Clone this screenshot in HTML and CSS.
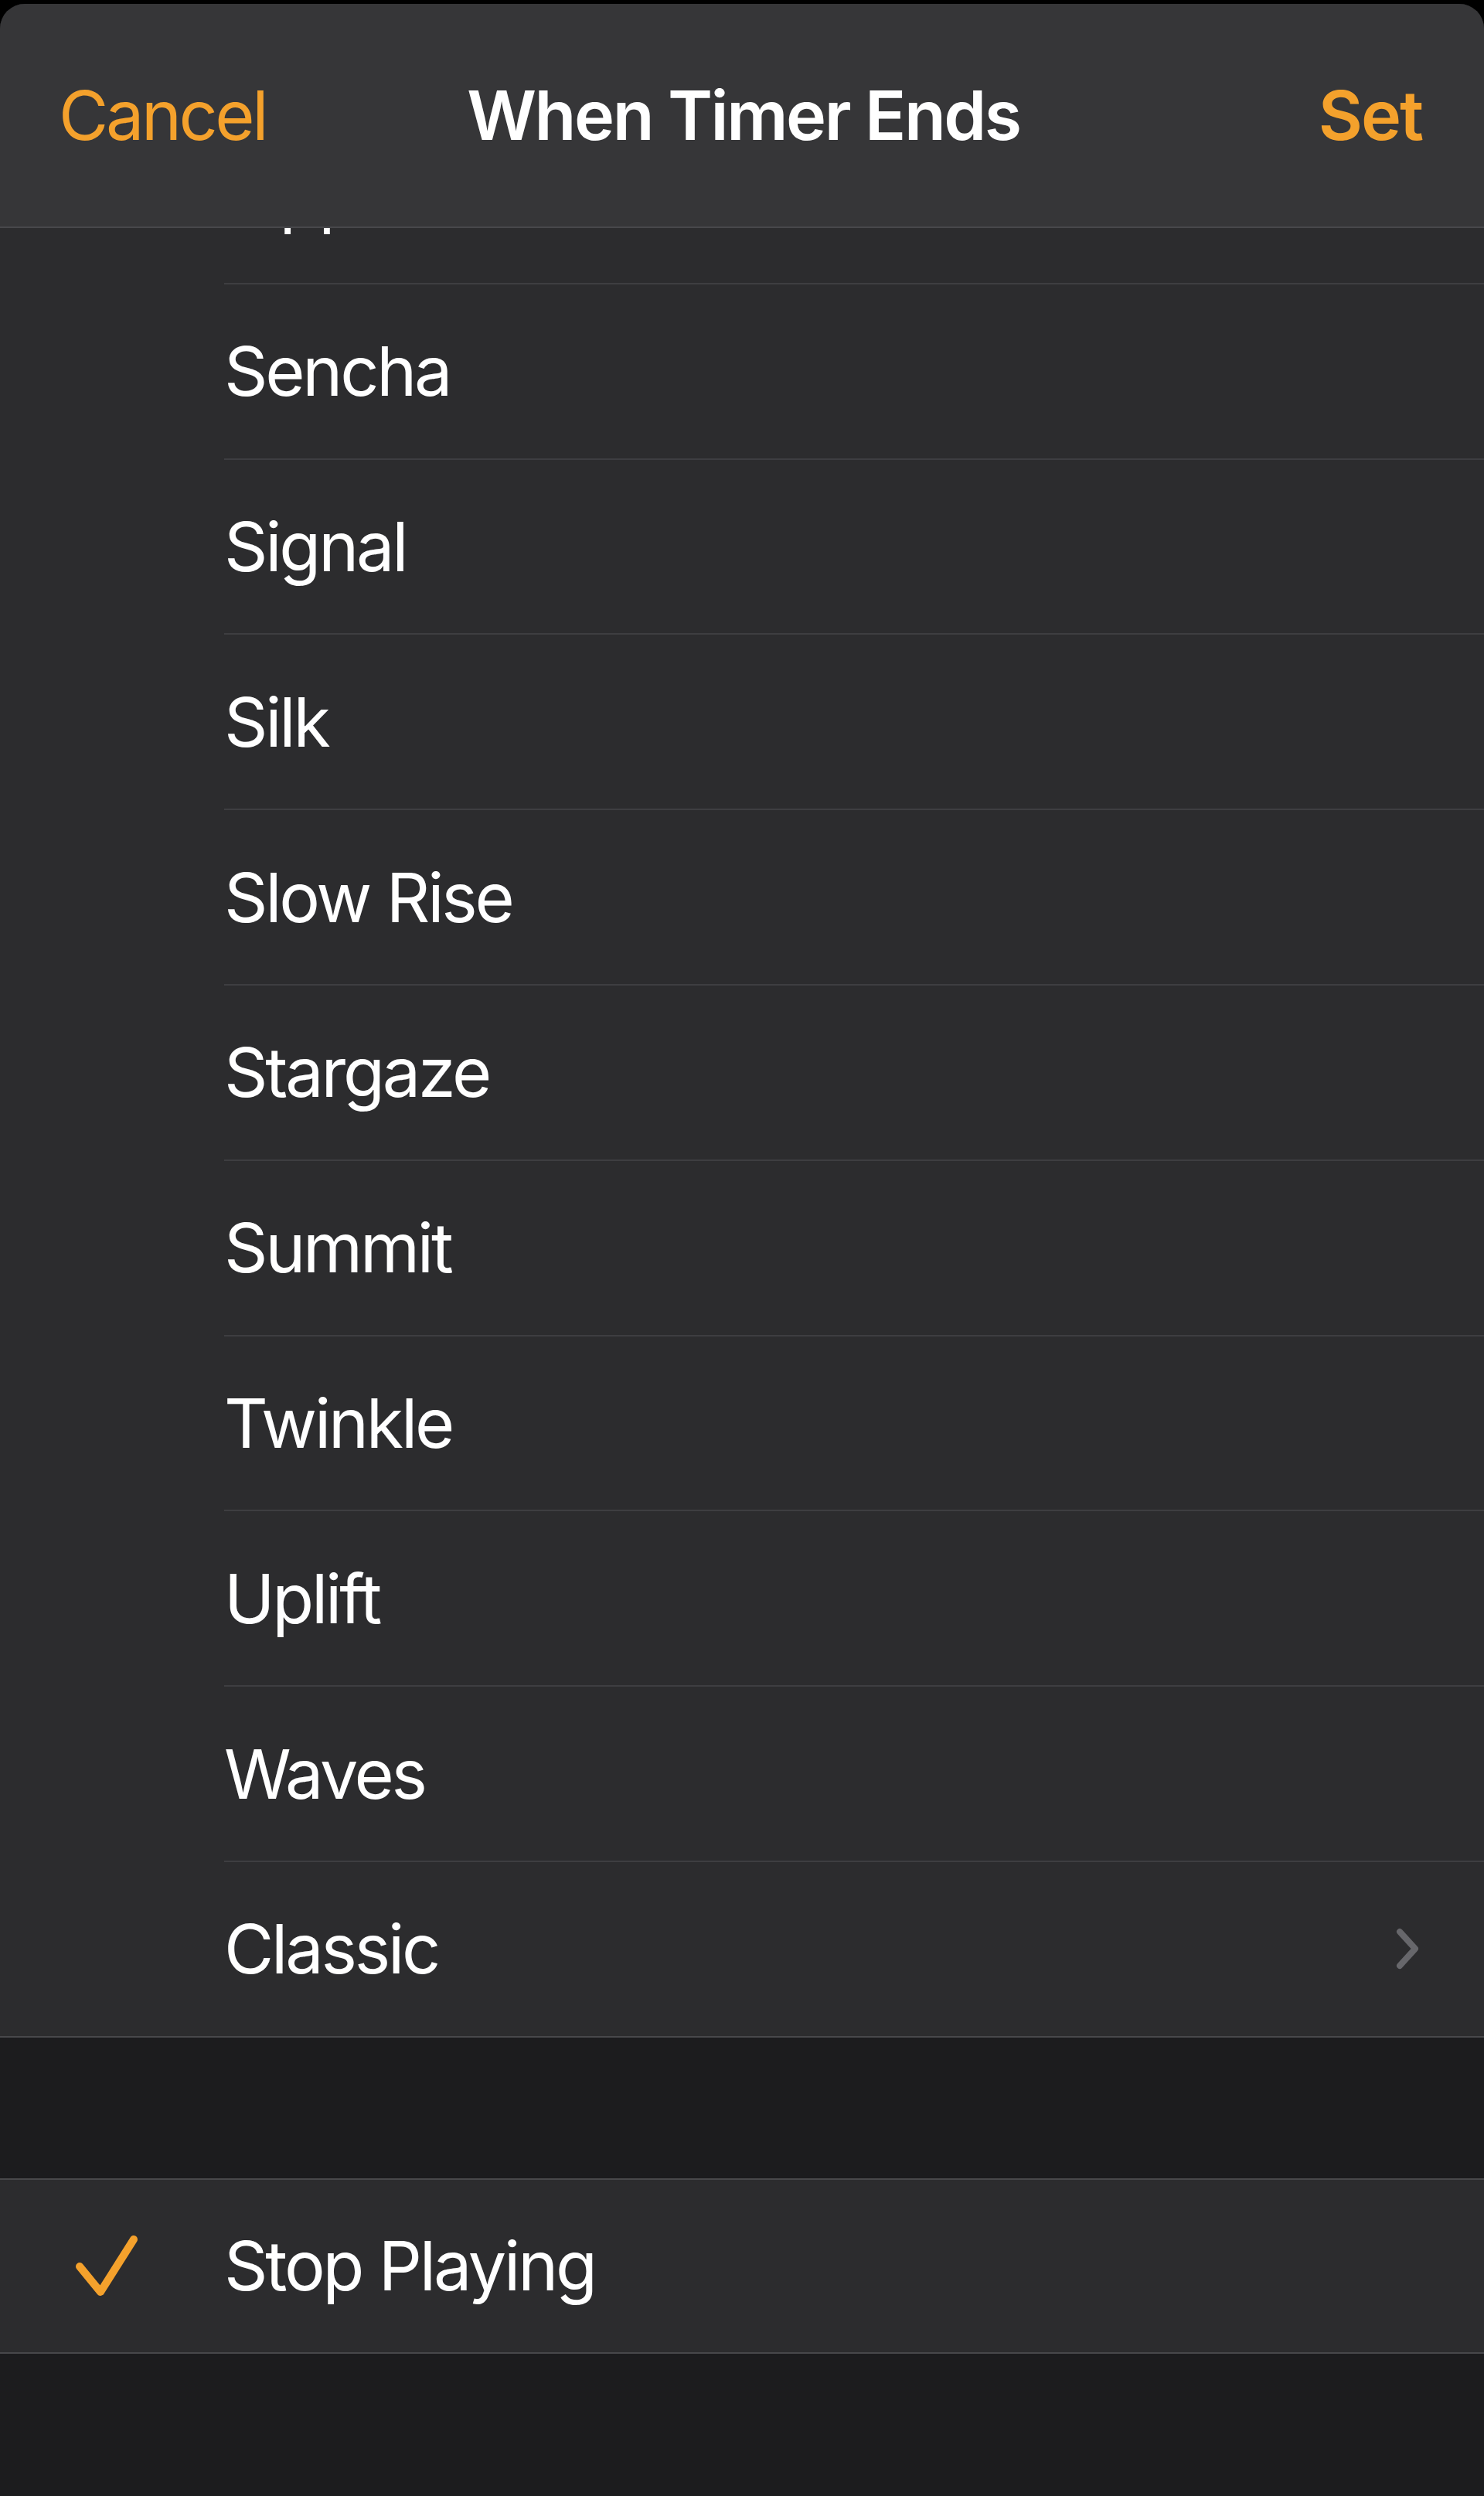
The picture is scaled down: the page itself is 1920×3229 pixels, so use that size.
FILE: index.html
```html
<!DOCTYPE html>
<html>
<head>
<meta charset="utf-8">
<link rel="stylesheet" href="styles.css">
</head>
<body>
<div class="sheet">
  <header class="nav">
    <span class="nav-btn">Cancel</span>
    <span class="nav-title">When Timer Ends</span>
    <span class="nav-btn nav-btn--strong">Set</span>
  </header>
  <div class="scroll">
    <section class="group group--tones">
      <div class="row row--partial"><span class="row-label">Ripples</span></div>
      <div class="row"><span class="row-label">Sencha</span></div>
      <div class="row"><span class="row-label">Signal</span></div>
      <div class="row"><span class="row-label">Silk</span></div>
      <div class="row"><span class="row-label">Slow Rise</span></div>
      <div class="row"><span class="row-label">Stargaze</span></div>
      <div class="row"><span class="row-label">Summit</span></div>
      <div class="row"><span class="row-label">Twinkle</span></div>
      <div class="row"><span class="row-label">Uplift</span></div>
      <div class="row"><span class="row-label">Waves</span></div>
      <div class="row row--last">
        <span class="row-label">Classic</span>
        <svg class="chevron" width="40" height="60" viewBox="0 0 40 60">
          <path d="M9 8 L29 30 L9 52" fill="none" stroke="#67676b" stroke-width="8" stroke-linecap="round" stroke-linejoin="round"/>
        </svg>
      </div>
    </section>
    <div class="spacer"></div>
    <section class="group">
      <div class="row row--last row--checked">
        <span class="row-lead">
          <svg class="check" width="100" height="90" viewBox="0 0 100 90">
            <path d="M15 45 L42 78 L85 10" fill="none" stroke="#f4a12c" stroke-width="10" stroke-linecap="round" stroke-linejoin="round"/>
          </svg>
        </span>
        <span class="row-label">Stop Playing</span>
      </div>
    </section>
  </div>
</div>
</body>
</html>
```
FILE: styles.css
```css
html, body {
  margin: 0;
  padding: 0;
  background: #000;
}

body {
  font-family: Inter, "Liberation Sans", Arial, sans-serif;
  -webkit-font-smoothing: antialiased;
}

.sheet {
  margin-top: 5px;
  height: 3224px;
  background: #1c1c1e;
  border-radius: 32px 32px 0 0;
  overflow: hidden;
  display: flex;
  flex-direction: column;
}

.nav {
  flex: none;
  height: 288px;
  background: #363638;
  border-bottom: 2px solid #48484b;
  display: flex;
  align-items: center;
  justify-content: space-between;
  padding: 0 80px 0 76px;
  position: relative;
  z-index: 2;
}

.nav-btn {
  color: #f4a12c;
  font-size: 88px;
  letter-spacing: -3.4px;
  line-height: 1;
}

.nav-btn--strong {
  font-weight: 600;
  letter-spacing: -2px;
}

.nav-title {
  color: #fff;
  font-size: 88px;
  font-weight: 600;
  letter-spacing: -2.4px;
  line-height: 1;
  position: absolute;
  left: 4px;
  right: 0;
  text-align: center;
  pointer-events: none;
}

.scroll {
  flex: 1;
  overflow: hidden;
}

.group {
  background: #2c2c2e;
  border-bottom: 2px solid #48484b;
}

.spacer + .group {
  border-top: 2px solid #48484b;
}

.group--tones {
  margin-top: -154px;
}

.row {
  display: flex;
  align-items: stretch;
  height: 226.8px;
  padding-left: 290px;
  box-sizing: border-box;
}

.row-label {
  flex: 1;
  display: flex;
  align-items: center;
  color: #fff;
  font-size: 88px;
  letter-spacing: -3.2px;
  border-bottom: 2px solid #3e3e41;
  padding-left: 0;
}

.row--last {
  height: 225px;
}

.row--last .row-label {
  border-bottom: none;
}

.chevron {
  align-self: center;
  margin-right: 78px;
}

.spacer {
  height: 182px;
}

.row--checked {
  padding-left: 0;
  height: 223px;
}

.row-lead {
  width: 290px;
  display: flex;
  align-items: center;
  padding-left: 88px;
  box-sizing: border-box;
}

.check {
  display: block;
  margin-top: 2px;
}
```
